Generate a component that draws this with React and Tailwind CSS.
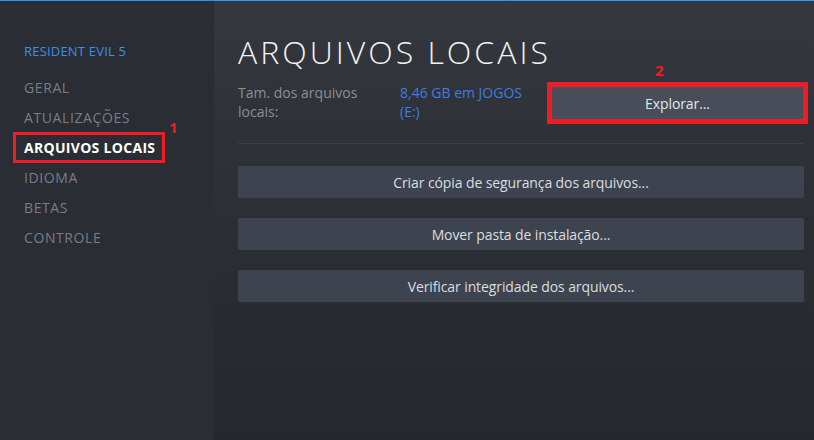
const NAV = ['GERAL', 'ATUALIZAÇÕES', 'ARQUIVOS LOCAIS', 'IDIOMA', 'BETAS', 'CONTROLE']

const ACTIONS = [
  'Criar cópia de segurança dos arquivos...',
  'Mover pasta de instalação...',
  'Verificar integridade dos arquivos...',
]

function Sidebar() {
  return (
    <aside className="w-[214px] shrink-0 bg-[#2a2d34] pt-[40px] pl-[24px]">
      <div className="text-[13px] leading-[20px] tracking-[0.2px] text-[#3f8ee4]">RESIDENT EVIL 5</div>
      <nav className="mt-[11px] flex flex-col">
        {NAV.map((item) => {
          const active = item === 'ARQUIVOS LOCAIS'
          return (
            <div key={item} className="relative h-[30px] leading-[30px]">
              <span
                className={
                  active
                    ? 'text-[14px] font-bold tracking-[0.3px] text-white'
                    : 'text-[14px] tracking-[0.6px] text-[#7a7d83]'
                }
              >
                {item}
              </span>
              {active && (
                <>
                  <div className="absolute left-[-11px] top-[0px] h-[31px] w-[152px] border-[3px] border-[#ee1c25]" />
                  <span className="absolute left-[145px] top-[-20px] text-[15px] font-bold text-[#ee1c25]">1</span>
                </>
              )}
            </div>
          )
        })}
      </nav>
    </aside>
  )
}

export default function App() {
  return (
    <div
      className="flex h-[440px] w-[814px] border-t border-[#1a9fff] overflow-hidden"
      style={{ fontFamily: '"Open Sans", "Noto Sans", sans-serif' }}
    >
      <Sidebar />
      <main className="flex-1 bg-gradient-to-b from-[#34373e] via-[#2b2e34] to-[#24272c] pl-[24px] pr-[10px] pt-[31px]">
        <h1 className="text-[32px] font-light leading-[40px] tracking-[3px] text-[#f2f2f2]">ARQUIVOS LOCAIS</h1>
        <div className="mt-[11px] flex items-start justify-between">
          <div className="flex text-[14px] leading-[19px]">
            <div className="w-[162px] text-[#8b8f95]">
              Tam. dos arquivos
              <br />
              locais:
            </div>
            <div className="text-[#3b7de2]">
              8,46 GB em JOGOS
              <br />
              (E:)
            </div>
          </div>
          <div className="relative mr-[1px] mt-[4px]">
            <button className="h-[32px] w-[251px] bg-[#474d59] text-[14px] tracking-[-0.1px] text-[#e6e7e8] outline-[5px] outline-solid outline-[#ee1c25]">
              Explorar...
            </button>
            <span className="absolute left-[103px] top-[-28px] text-[15px] font-bold text-[#ee1c25]">2</span>
          </div>
        </div>
        <div className="mt-[22px] h-px bg-[#3a3e46]" />
        <div className="mt-[22px] flex flex-col gap-[20px]">
          {ACTIONS.map((label) => (
            <button
              key={label}
              className="h-[32px] w-full rounded-[2px] bg-[#3d434f] text-[14px] tracking-[-0.1px] text-[#dcdedf]"
            >
              {label}
            </button>
          ))}
        </div>
      </main>
    </div>
  )
}
